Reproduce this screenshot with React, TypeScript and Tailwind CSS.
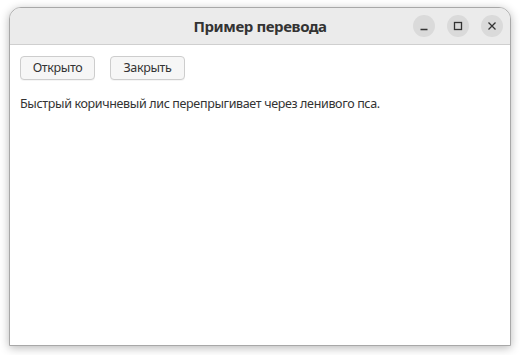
import React from "react";

const WinButton = ({ children }: { children: React.ReactNode }) => (
  <button className="flex h-[22px] w-[22px] items-center justify-center rounded-full bg-[#dadada] text-[#333]">
    {children}
  </button>
);

const PushButton = ({ label }: { label: string }) => (
  <button className="h-[24px] w-[75px] rounded-[4px] border border-[#cdcdcd] bg-[#f6f6f6] text-[12.5px] tracking-[-0.35px] text-[#333] shadow-[0_1px_0_rgba(0,0,0,0.04)]">
    {label}
  </button>
);

export default function App() {
  return (
    <div
      className="h-[355px] w-[520px] bg-white pl-[9px] pr-[9px] pt-[7px]"
      style={{ fontFamily: '"Noto Sans", "DejaVu Sans", sans-serif' }}
    >
      <div className="flex h-[339px] w-[502px] flex-col overflow-hidden rounded-t-[12px] border border-[#a8a8a8] bg-white shadow-[0_2px_10px_rgba(0,0,0,0.28)]">
        <div className="relative flex h-[37px] shrink-0 items-center justify-center border-b border-[#cfcfcf] bg-[#ebebeb]">
          <span className="text-[15px] font-bold tracking-[-0.4px] text-[#333]">Пример перевода</span>
          <div className="absolute right-[7px] top-[7px] flex gap-[12px]">
            <WinButton>
              <svg width="10" height="10" viewBox="0 0 10 10">
                <path d="M1.5 8.5h7" stroke="#333" strokeWidth="1.3" />
              </svg>
            </WinButton>
            <WinButton>
              <svg width="10" height="10" viewBox="0 0 10 10">
                <rect x="1.5" y="1.5" width="7" height="7" fill="none" stroke="#333" strokeWidth="1.3" />
              </svg>
            </WinButton>
            <WinButton>
              <svg width="10" height="10" viewBox="0 0 10 10">
                <path d="M1.5 1.5l7 7M8.5 1.5l-7 7" stroke="#333" strokeWidth="1.3" />
              </svg>
            </WinButton>
          </div>
        </div>
        <div className="flex flex-col px-[10px] pt-[11px]">
          <div className="flex gap-[15px]">
            <PushButton label="Открыто" />
            <PushButton label="Закрыть" />
          </div>
          <p className="mt-[15px] text-[12.5px] tracking-[-0.35px] text-[#333]">
            Быстрый коричневый лис перепрыгивает через ленивого пса.
          </p>
        </div>
      </div>
    </div>
  );
}
